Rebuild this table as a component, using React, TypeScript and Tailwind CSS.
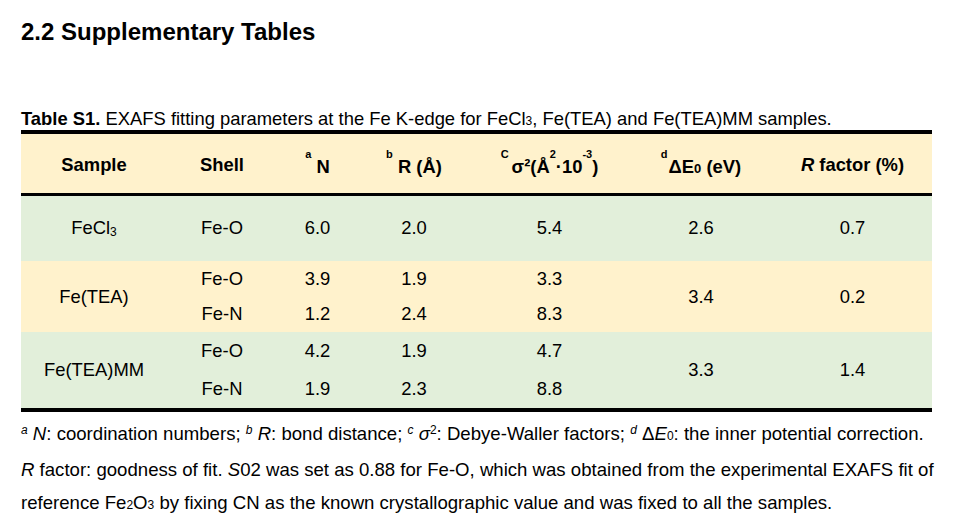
import React from 'react';

const font = { fontFamily: '"Liberation Sans", Arial, sans-serif' };

const Sup = ({ children }: { children: React.ReactNode }) => (
  <span className="text-[11px] align-[15px] leading-none">{children}</span>
);

const App = () => {
  return (
    <div className="w-[974px] h-[530px] bg-white text-black overflow-hidden pl-[21px]" style={font}>
      <h2 className="pt-[19px] text-[24px] leading-[26px] font-bold">2.2 Supplementary Tables</h2>

      <p className="mt-[64px] text-[18.4px] leading-[20px] whitespace-nowrap">
        <span className="font-bold">Table S1.</span> EXAFS fitting parameters at the Fe K-edge for FeCl
        <span className="text-[12px] leading-none">3</span>, Fe(TEA) and Fe(TEA)MM samples.
      </p>

      {/* Table */}
      <table className="mt-[1px] w-[911px] table-fixed border-collapse text-[18.4px] text-center">
        <colgroup>
          <col className="w-[146px]" />
          <col className="w-[110px]" />
          <col className="w-[81px]" />
          <col className="w-[112px]" />
          <col className="w-[159px]" />
          <col className="w-[144px]" />
          <col className="w-[159px]" />
        </colgroup>
        <thead>
          <tr className="h-[62px] bg-[#fff2cc] border-t-[4px] border-b-[3px] border-black font-bold">
            <th className="pt-[3px]">Sample</th>
            <th className="pt-[3px]">Shell</th>
            <th className="pt-[3px]">
              <Sup>a</Sup> N
            </th>
            <th className="pt-[3px]">
              <Sup>b</Sup> R (Å)
            </th>
            <th className="pt-[3px] whitespace-nowrap">
              <Sup>C</Sup>
              <span className="ml-[3px]">σ²(Å</span>
              <Sup>2</Sup>·10<Sup>-3</Sup>)
            </th>
            <th className="pt-[3px] whitespace-nowrap">
              <Sup>d</Sup>
              <span className="ml-[1px]">ΔE</span>
              <span className="text-[13px] leading-none">0</span> (eV)
            </th>
            <th className="pt-[3px]">
              <span className="italic">R</span> factor (%)
            </th>
          </tr>
        </thead>
        <tbody>
          <tr className="h-[67px] bg-[#e2efda]">
            <td>
              FeCl<span className="text-[12px] leading-none align-[-2px]">3</span>
            </td>
            <td>Fe-O</td>
            <td>6.0</td>
            <td>2.0</td>
            <td>5.4</td>
            <td>2.6</td>
            <td>0.7</td>
          </tr>

          <tr className="h-[35px] bg-[#fff2cc]">
            <td rowSpan={2}>Fe(TEA)</td>
            <td>Fe-O</td>
            <td>3.9</td>
            <td>1.9</td>
            <td>3.3</td>
            <td rowSpan={2}>3.4</td>
            <td rowSpan={2}>0.2</td>
          </tr>
          <tr className="h-[36px] bg-[#fff2cc]">
            <td>Fe-N</td>
            <td>1.2</td>
            <td>2.4</td>
            <td>8.3</td>
          </tr>

          <tr className="h-[37px] bg-[#e2efda]">
            <td rowSpan={2}>Fe(TEA)MM</td>
            <td>Fe-O</td>
            <td>4.2</td>
            <td>1.9</td>
            <td>4.7</td>
            <td rowSpan={2}>3.3</td>
            <td rowSpan={2}>1.4</td>
          </tr>
          <tr className="h-[41px] bg-[#e2efda] border-b-[4px] border-black">
            <td>Fe-N</td>
            <td>1.9</td>
            <td>2.3</td>
            <td>8.8</td>
          </tr>
        </tbody>
      </table>

      {/* Footnotes */}
      <div className="mt-[2px] text-[18.6px] leading-[33px] whitespace-nowrap">
        <p>
          <span className="italic text-[12px] align-[6px]">a</span> <span className="italic">N</span>: coordination
          numbers; <span className="italic text-[12px] align-[6px]">b</span> <span className="italic">R</span>: bond
          distance; <span className="italic text-[12px] align-[6px]">c</span> <span className="italic">σ</span>
          <span className="text-[12px] align-[6px]">2</span>: Debye-Waller factors;{' '}
          <span className="italic text-[12px] align-[6px]">d</span> Δ<span className="italic">E</span>
          <span className="text-[12px]">0</span>: the inner potential correction.
        </p>
        <p>
          <span className="italic">R</span> factor: goodness of fit. <span className="italic">S</span>02 was set as
          0.88 for Fe-O, which was obtained from the experimental EXAFS fit of
        </p>
        <p>
          reference Fe<span className="text-[12px]">2</span>O<span className="text-[12px]">3</span> by fixing CN as
          the known crystallographic value and was fixed to all the samples.
        </p>
      </div>
    </div>
  );
};

export default App;
